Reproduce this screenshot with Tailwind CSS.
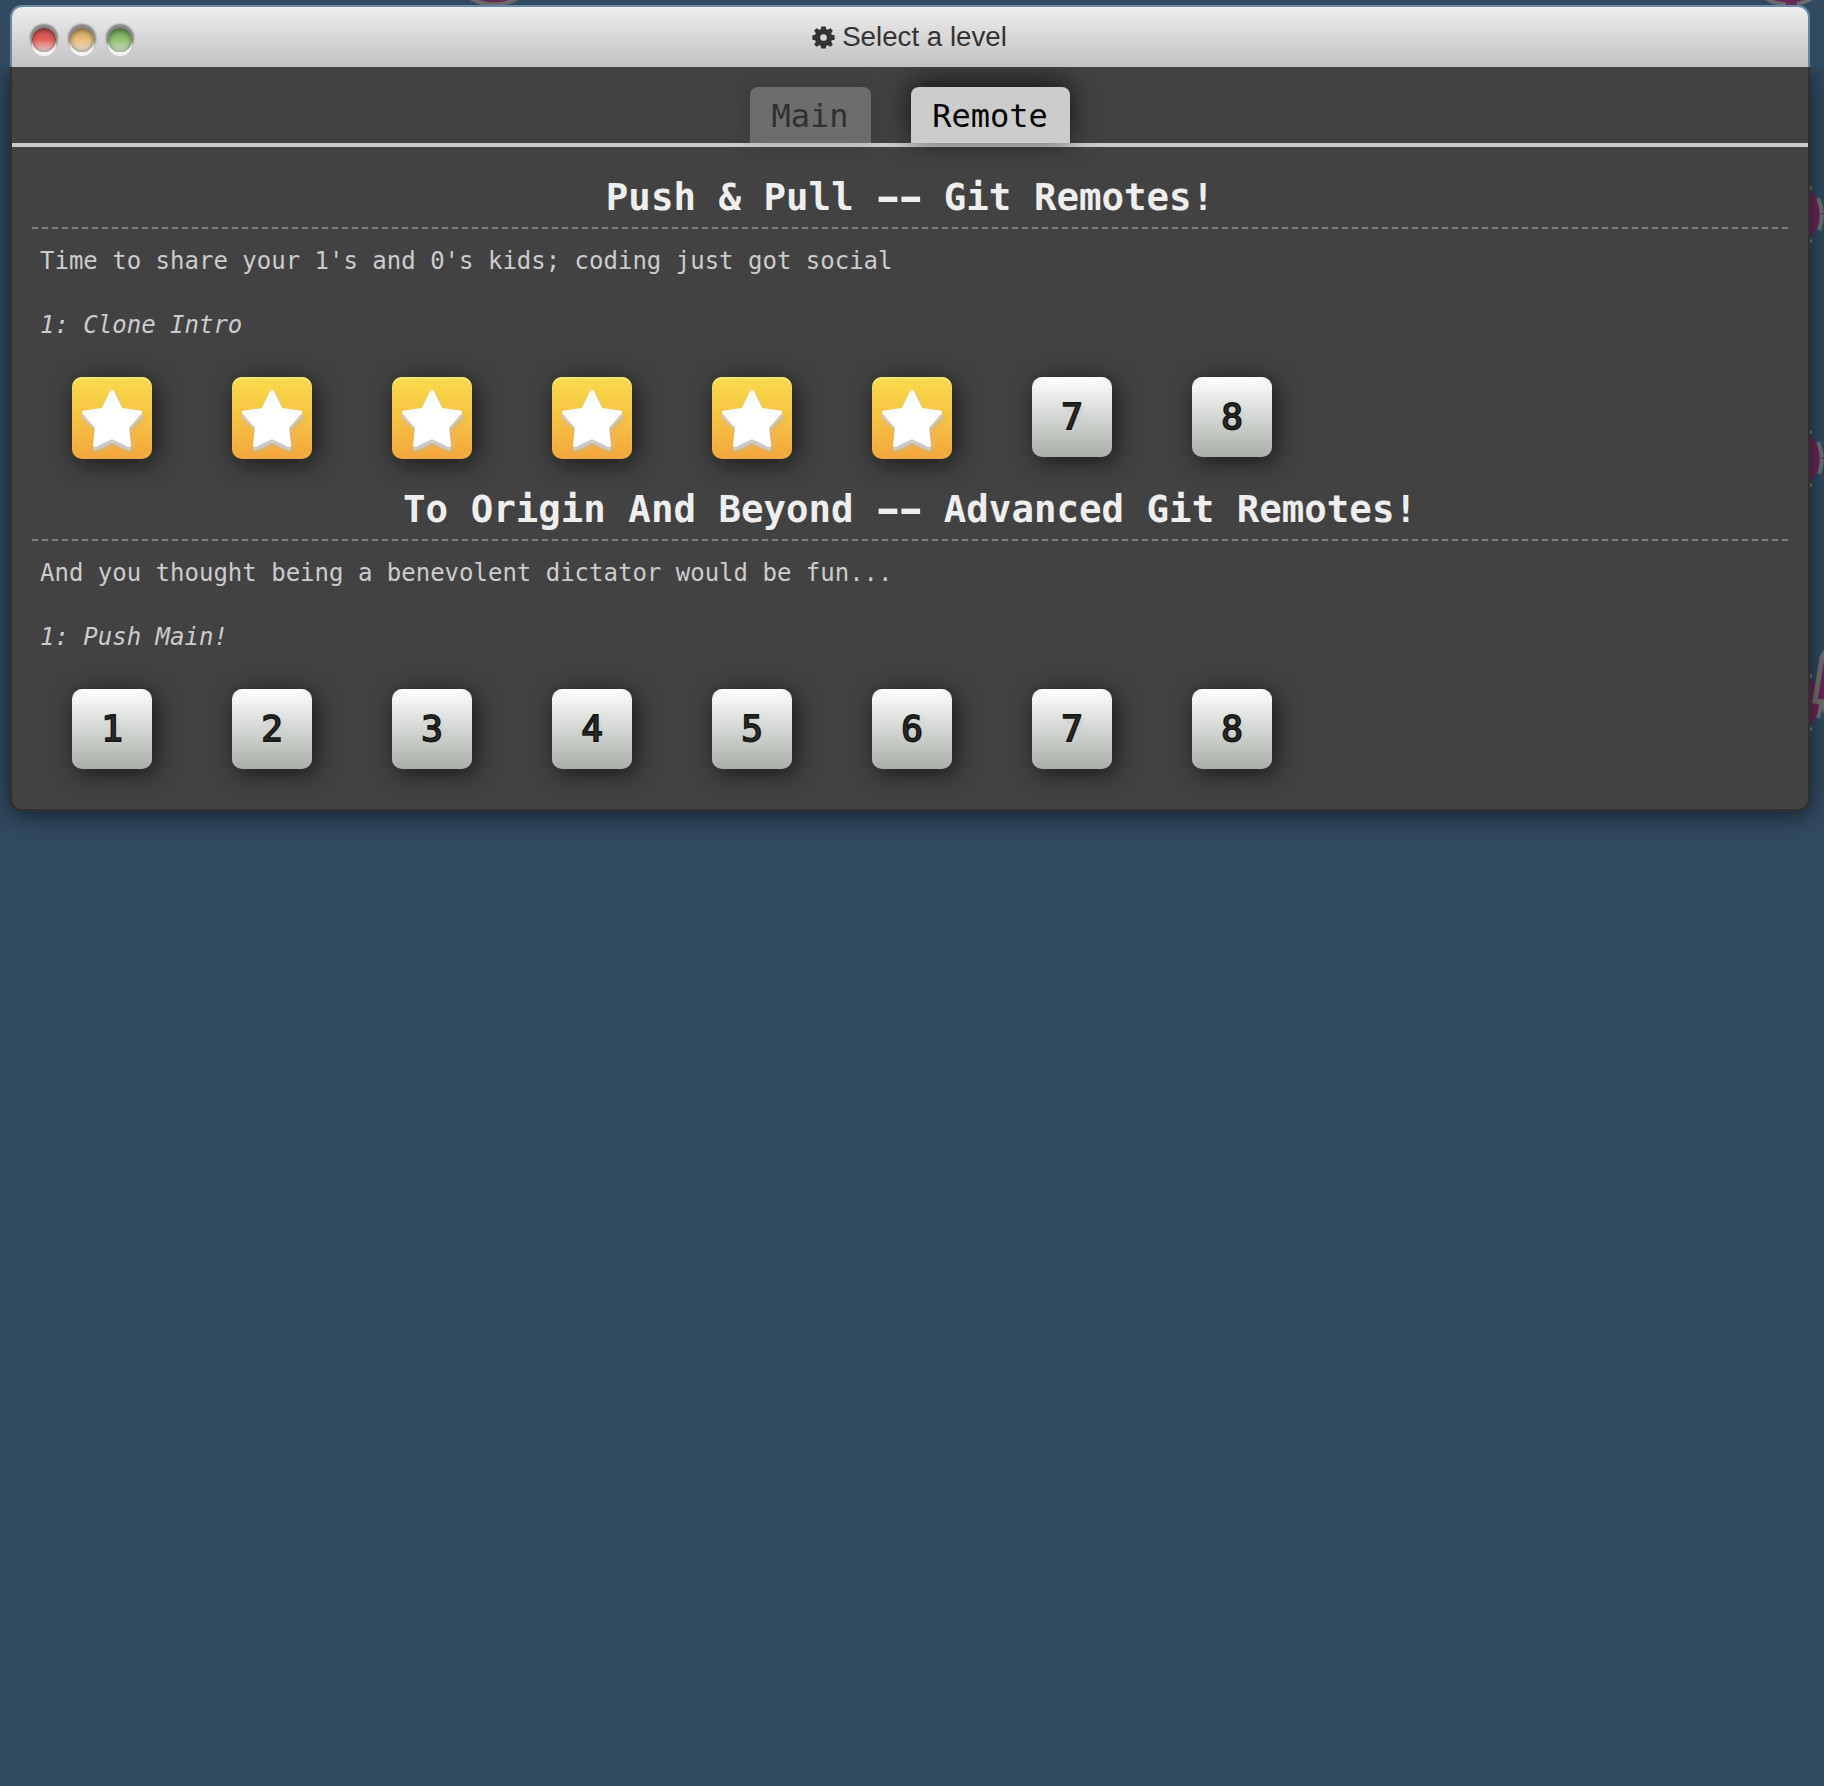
<!DOCTYPE html>
<html lang="en">
<head>
<meta charset="utf-8">
<title>Select a level</title>
<script src="https://cdn.jsdelivr.net/npm/@tailwindcss/browser@4"></script>
</head>
<body class="relative h-[1786px] w-[1824px] overflow-hidden bg-[#304a62] font-['DejaVu_Sans_Mono',monospace]">
<!-- commit tree behind the window -->
<svg class="absolute inset-0" width="1824" height="1786" fill="#632b56" stroke="#6a6a6a" stroke-width="4">
  <circle cx="494" cy="-41" r="45.5"/>
  <circle cx="1789" cy="-41" r="45.5"/>
  <path d="M1786 0h11v6h-11z" stroke="none"/>
  <g fill="#6b2759" stroke="none"><circle cx="1788" cy="214" r="32"/><circle cx="1788" cy="458" r="32"/><circle cx="1788" cy="702" r="32"/></g>
  <g fill="none" stroke="#717171"><path d="M1818 198q7 16 1 32M1818 442q7 16 1 32M1818 718q3-8 3-16"/></g>
  <g stroke="#6b2759" stroke-width="1"><path d="M1821 214h3M1821 458h3"/></g>
  <path d="M1828 648l-6 9-7 44 8 1 4 14" fill="#6b2759" stroke="#717171" stroke-width="5"/>
  <g fill="#808080" stroke="none"><circle cx="1810" cy="188" r="2"/><circle cx="1810" cy="241" r="2"/><circle cx="1810" cy="432" r="2"/><circle cx="1810" cy="485" r="2"/><circle cx="1810" cy="676" r="2"/><circle cx="1810" cy="729" r="2"/></g>
</svg>
<main class="relative mx-[10px] w-[1800px] pt-[5px]">
  <header class="relative z-0 flex h-[62px] items-center rounded-t-[12px] border-x-2 border-t-2 border-[#6888a8] bg-linear-to-b from-[#eeeeee] to-[#c2c2c2] px-5">
    <div class="flex w-[300px] gap-[14px] pt-[5px]">
      <i class="size-6 rounded-full bg-linear-to-b from-[#bd4a48] via-[#e9635f] via-50% to-[#dccccc] shadow-[0_4px_0_#f5f5f5,0_-2px_2px_2px_#858585,inset_0_1px_5px_rgba(0,0,0,0.55)]"></i>
      <i class="size-6 rounded-full bg-linear-to-b from-[#c69a5c] via-[#edc07b] via-50% to-[#dcd6cc] shadow-[0_4px_0_#f5f5f5,0_-2px_2px_2px_#858585,inset_0_1px_5px_rgba(0,0,0,0.55)]"></i>
      <i class="size-6 rounded-full bg-linear-to-b from-[#6e9c58] via-[#92c473] via-50% to-[#ccdcc6] shadow-[0_4px_0_#f5f5f5,0_-2px_2px_2px_#858585,inset_0_1px_5px_rgba(0,0,0,0.55)]"></i>
    </div>
    <h1 class="flex flex-1 items-center justify-center gap-[7px] pr-[301px] font-['Liberation_Sans',sans-serif] text-[27.7px] leading-[60px] text-[#333]">
      <svg width="23" height="23" viewBox="-12 -12 24 24" fill="#333"><path fill-rule="evenodd" d="M-2.300-11.6H2.300L2.900-8.700 4.400-8 7.300-9.700 9.700-7.300 8-4.400 8.700-2.900 11.6-2.300V2.300L8.700 2.900 8 4.400 9.700 7.300 7.300 9.700 4.400 8 2.900 8.700 2.300 11.6H-2.300L-2.900 8.700-4.400 8-7.300 9.700-9.700 7.300-8 4.400-8.700 2.900-11.6 2.300V-2.300L-8.700-2.900-8-4.400-9.700-7.300-7.300-9.700-4.400-8-2.900-8.700ZM0-3.500A3.500 3.500 0 1 0 0 3.500 3.500 3.500 0 1 0 0-3.500Z"/></svg>
      <span>Select a level</span>
    </h1>
  </header>
  <div class="h-[744px] overflow-hidden rounded-b-[12px] border-x-2 border-b-2 border-[#303030] bg-[#424242] shadow-[0_4px_24px_rgba(0,0,0,0.6)] [clip-path:inset(0_-14px_-40px_-10px)]">
    <nav class="flex h-20 items-end justify-center gap-10 border-b-4 border-[#ccc] pr-px text-[32px]">
      <div class="h-14 w-[121px] rounded-t-[8px] bg-[#6d6d6d] text-center leading-[58px] text-[#303030] shadow-[0_0_20px_rgba(0,0,0,0.15)]">Main</div>
      <div class="h-14 w-[159px] rounded-t-[8px] bg-[#ccc] text-center leading-[58px] text-black shadow-[0_-4px_28px_rgba(0,0,0,0.75)]">Remote</div>
    </nav>
    <div id="levels" class="flex flex-col px-5 pt-[30px]"></div>
  </div>
</main>
<template id="section">
  <section class="h-[312px]">
    <h2 class="h-[52px] border-b-2 border-dashed border-[#808080] text-center text-[37.44px] leading-10 font-bold text-[#eee]"></h2>
    <p class="mt-3 pl-2 text-[24px] leading-10 text-[#ccc]"></p>
    <p class="mt-6 pl-2 text-[24px] leading-10 text-[#ccc] italic"></p>
    <div class="mt-8 flex items-start gap-20 pl-10"></div>
  </section>
</template>
<template id="solved">
  <div class="h-[82px] w-20 rounded-[10px] bg-linear-to-b from-[#f9dc4a] to-[#f2a73b] shadow-[4px_4px_24px_rgba(0,0,0,0.65),inset_0_2px_1px_#f8e472]">
    <svg class="overflow-visible" width="80" height="82" stroke-linejoin="round" stroke-width="4">
      <path class="drop-shadow-[2px_1px_2px_#bbbbbb99]" d="M40 19L49 37 68 39 55 52 57 72 40 64 23 72 25 52 12 39 31 37Z" fill="#c9c9c9" stroke="#c9c9c9"/>
      <path d="M40 15L49 33 68 35.500 55 50 57 68 40 60 23 68 25 50 12 35.500 31 33Z" fill="#fff" stroke="#fff"/>
    </svg>
  </div>
</template>
<template id="open">
  <div class="size-20 rounded-[10px] bg-linear-to-b from-white to-[#a9b0a8] text-center text-[36px] leading-[79px] text-[#303030] shadow-[4px_4px_24px_rgba(0,0,0,0.65)] [-webkit-text-stroke:1.8px_#181818] [text-shadow:2px_4px_4px_#cccccc]"></div>
</template>
<script>
const levels = [
  ['Push & Pull -- Git Remotes!', "Time to share your 1's and 0's kids; coding just got social", '1: Clone Intro', 6],
  ['To Origin And Beyond -- Advanced Git Remotes!', 'And you thought being a benevolent dictator would be fun...', '1: Push Main!', 0]
];
const copy = id => document.getElementById(id).content.firstElementChild.cloneNode(true);
for (const [title, about, name, solved] of levels) {
  const s = copy('section');
  const [a, b] = title.split('--');
  // widened hyphens that keep the monospace pitch
  const dash = document.createElement('span');
  dash.className = 'mx-[8.5px] inline-block w-[28.1px] scale-x-[1.62] -indent-[4px] text-left tracking-[-8.6px] whitespace-nowrap';
  dash.textContent = '--';
  s.children[0].append(a, dash, b);
  s.children[1].textContent = about;
  s.children[2].textContent = name;
  for (let i = 1; i <= 8; i++) {
    const t = copy(i <= solved ? 'solved' : 'open');
    if (i > solved) t.textContent = i;
    s.children[3].append(t);
  }
  document.getElementById('levels').append(s);
}
</script>
</body>
</html>
